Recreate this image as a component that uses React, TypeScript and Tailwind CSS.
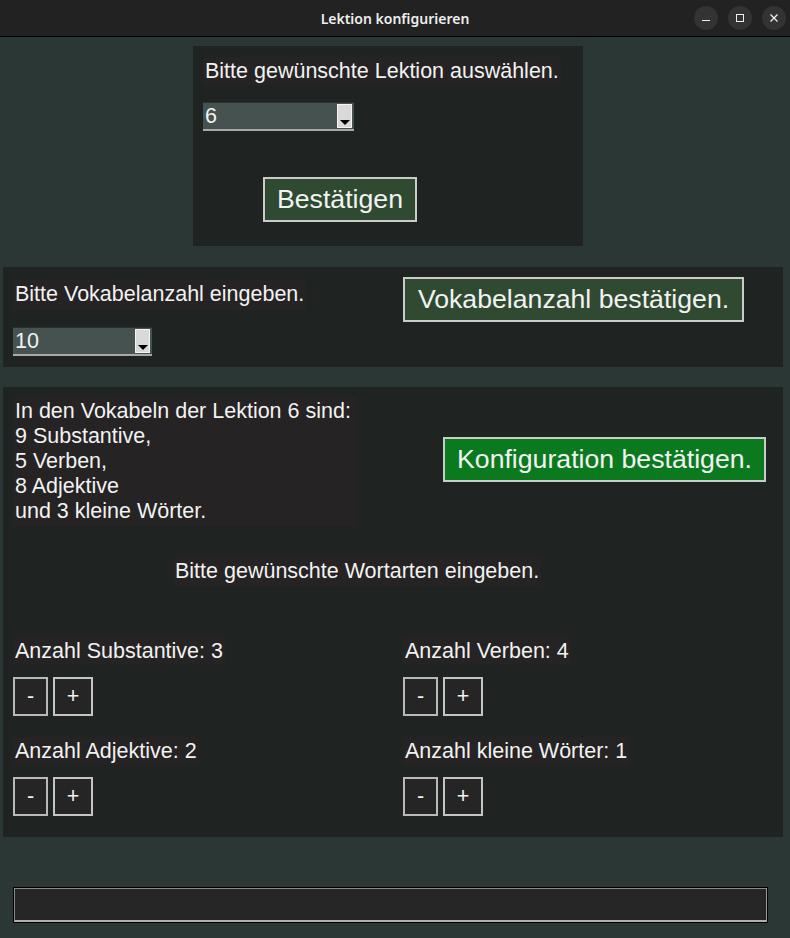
import React from "react";

const font = { fontFamily: '"Liberation Sans", Arial, sans-serif' };

const Label = ({ children, className = "w-fit" }: { children: React.ReactNode; className?: string }) => (
  <div className={`bg-[#252323] text-[#f2f2f2] text-[21.5px] leading-[25px] px-[2px] py-[2px] ${className}`}>
    {children}
  </div>
);

const Combo = ({ value, width }: { value: string; width: string }) => (
  <div className={`flex h-[29px] ${width} bg-[#465250] border-b-2 border-[#a8aaa8] border-t border-t-[#2a302f]`}>
    <div className="flex-1 text-[#f2f2f2] text-[21.5px] leading-[26px] pl-[2px]">{value}</div>
    <div className="w-[15px] my-[1px] mr-[2px] bg-[#d9d9d9] border border-[#f4f4f4] flex items-end justify-center pb-[2px]">
      <div className="w-0 h-0 border-l-[5px] border-r-[5px] border-t-[5px] border-l-transparent border-r-transparent border-t-black" />
    </div>
  </div>
);

const BigButton = ({ children, className = "" }: { children: React.ReactNode; className?: string }) => (
  <button className={`h-[45px] border-2 border-[#c9ccc9] text-[#f2f2f2] text-[26.67px] leading-none whitespace-nowrap ${className}`}>
    {children}
  </button>
);

const Stepper = ({ label }: { label: string }) => (
  <div className="flex flex-col">
    <Label className="w-fit h-[28px] py-[1px]">{label}</Label>
    <div className="flex gap-[5px] mt-[12px]">
      <button className="w-[35px] h-[39px] bg-[#252525] border-2 border-[#b9b9b9] text-[#f2f2f2] text-[21.5px]">-</button>
      <button className="w-[40px] h-[39px] bg-[#252525] border-2 border-[#c4c4c4] text-[#f2f2f2] text-[21.5px]">+</button>
    </div>
  </div>
);

export default function App() {
  return (
    <div className="w-[790px] h-[938px] bg-[#2b3734] flex flex-col overflow-hidden" style={font}>
      {/* title bar */}
      <div className="h-[37px] bg-[#222222] border-b border-black flex items-center relative shrink-0">
        <div className="flex-1 text-center text-[#eeeeee] text-[14px] font-semibold" style={{ fontFamily: '"Noto Sans", sans-serif' }}>
          Lektion konfigurieren
        </div>
        <div className="absolute right-[4px] top-[6px] flex gap-[10px]">
          <div className="w-[24px] h-[24px] rounded-full bg-[#333333] flex items-center justify-center">
            <div className="w-[8px] h-[1px] bg-[#eeeeee] mt-[5px]" />
          </div>
          <div className="w-[24px] h-[24px] rounded-full bg-[#333333] flex items-center justify-center">
            <div className="w-[8px] h-[8px] border border-[#eeeeee]" />
          </div>
          <div className="w-[24px] h-[24px] rounded-full bg-[#333333] flex items-center justify-center">
            <svg width="10" height="10" viewBox="0 0 10 10">
              <path d="M1.5 1.5 L8.5 8.5 M8.5 1.5 L1.5 8.5" stroke="#eeeeee" strokeWidth="1.3" />
            </svg>
          </div>
        </div>
      </div>

      {/* lesson frame */}
      <div className="ml-[193px] mt-[9px] w-[390px] h-[200px] bg-[#1f2322] pl-[10px] pt-[11px] flex flex-col shrink-0">
        <Label className="w-fit h-[28px] py-[1px]">Bitte gewünschte Lektion auswählen.</Label>
        <div className="mt-[17px]">
          <Combo value="6" width="w-[151px]" />
        </div>
        <BigButton className="mt-[46px] ml-[60px] w-[154px] bg-[#2f4a31]">Bestätigen</BigButton>
      </div>

      {/* vocab count frame */}
      <div className="ml-[3px] mt-[21px] w-[780px] h-[100px] bg-[#1f2322] flex shrink-0">
        <div className="w-[400px] pl-[10px] pt-[13px] flex flex-col">
          <Label className="w-fit h-[30px] py-[2px]">Bitte Vokabelanzahl eingeben.</Label>
          <div className="mt-[17px]">
            <Combo value="10" width="w-[139px]" />
          </div>
        </div>
        <div className="pt-[10px]">
          <BigButton className="w-[341px] bg-[#2f4a31]">Vokabelanzahl bestätigen.</BigButton>
        </div>
      </div>

      {/* configuration frame */}
      <div className="ml-[3px] mt-[20px] w-[780px] h-[450px] bg-[#1f2322] flex flex-col shrink-0">
        <div className="flex pt-[10px] pl-[10px]">
          <Label className="h-[129px] w-[343px] shrink-0 py-[2px]">
            In den Vokabeln der Lektion 6 sind:
            <br />9 Substantive,
            <br />5 Verben,
            <br />8 Adjektive
            <br />und 3 kleine Wörter.
          </Label>
          <div className="pt-[40px] pl-[87px]">
            <BigButton className="w-[323px] bg-[#0b7a1f]">Konfiguration bestätigen.</BigButton>
          </div>
        </div>
        <div className="pl-[170px] mt-[31px]">
          <Label className="w-fit h-[29px] py-[2px]">Bitte gewünschte Wortarten eingeben.</Label>
        </div>
        <div className="grid grid-cols-[390px_1fr] pl-[10px] mt-[51px] gap-y-[21px]">
          <Stepper label="Anzahl Substantive: 3" />
          <Stepper label="Anzahl Verben: 4" />
          <Stepper label="Anzahl Adjektive: 2" />
          <Stepper label="Anzahl kleine Wörter: 1" />
        </div>
      </div>

      {/* entry */}
      <div className="ml-[13px] mt-[50px] w-[755px] h-[36px] bg-[#262626] border border-black shrink-0">
        <div className="h-full border border-t-[#8a8a8a] border-l-[#8a8a8a] border-r-[#9a9a9a] border-b-[#b0b0b0] border-b-2" />
      </div>
    </div>
  );
}
